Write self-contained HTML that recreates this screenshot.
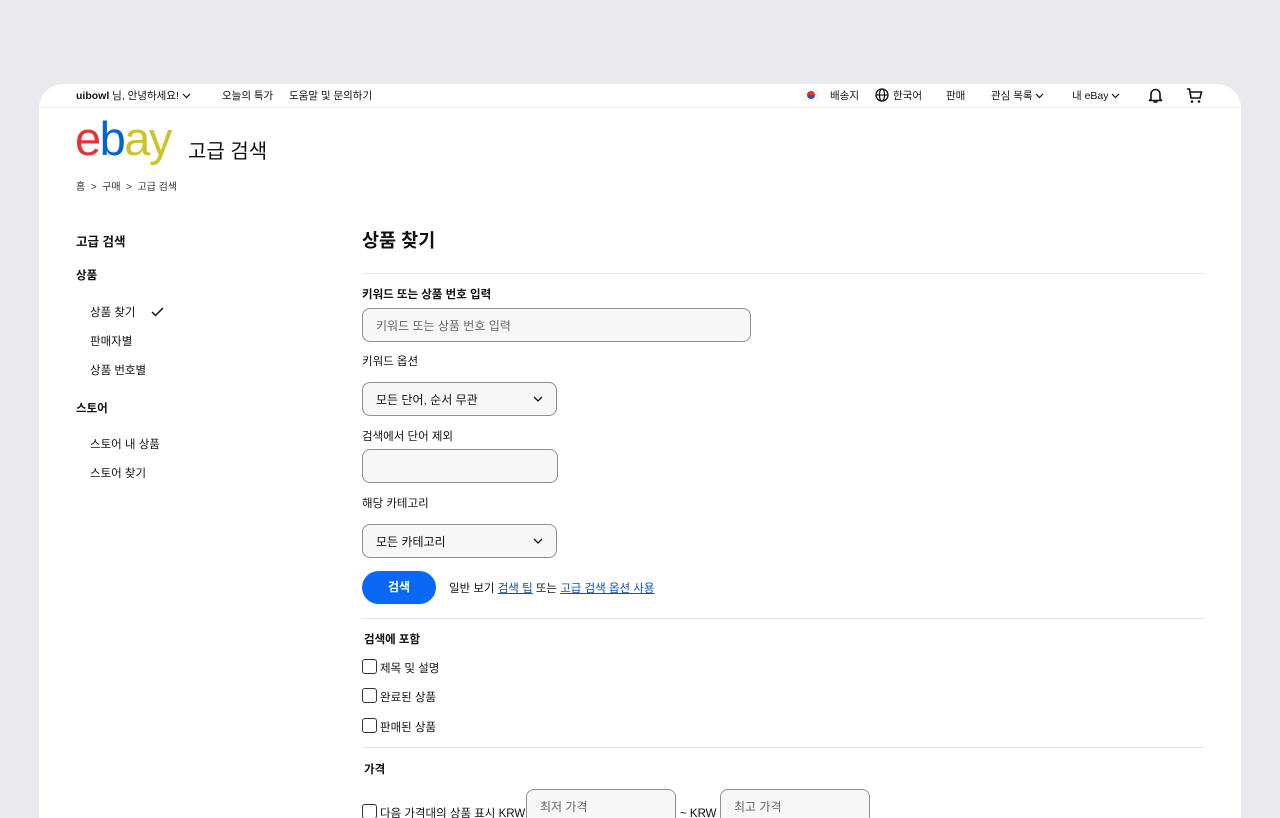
<!DOCTYPE html>
<html style="width:1280px;height:818px;overflow:hidden"><head><meta charset="utf-8"><style>
*{box-sizing:border-box;margin:0;padding:0}
body{width:1280px;height:818px;overflow:hidden;background:#e9e9ee;font-family:"Liberation Sans","Noto Sans CJK KR",sans-serif;color:#111;position:relative}
.card{position:absolute;left:39px;top:84px;width:1202px;height:734px;background:#fff;border-radius:24px 24px 0 0}
.a{position:absolute;white-space:nowrap;line-height:1.2}
.m{margin-top:4px}
.top{font-size:10.5px;margin-top:1px}
.hr{position:absolute;height:1px;background:#e5e5e5}
.inp{position:absolute;border:1px solid #8f8f8f;border-radius:8px;background:#f7f7f7;font-size:12px;color:#666;padding-left:13px;display:flex;align-items:center}
.sel{position:absolute;border:1px solid #8f8f8f;border-radius:8px;background:#f7f7f7;font-size:12px;color:#111;padding-left:13px;display:flex;align-items:center}
.sel svg{position:absolute;right:13px;top:50%;margin-top:-3px}
.cb{position:absolute;width:15px;height:15px;border:1.3px solid #333;border-radius:3px}
.lbl{font-size:11.5px;margin-top:4px}
.b{font-weight:bold}
a{color:#0654ba}
</style></head><body>
<div class="card"></div>
<div class="hr" style="left:39px;top:107px;width:1202px;background:#eee"></div>
<div class="a top" style="left:76px;top:89px"><b>uibowl</b> 님, 안녕하세요! <svg width="9" height="6" viewBox="0 0 9 6"><path d="M1 1l3.5 3.5L8 1" fill="none" stroke="#111" stroke-width="1.2"/></svg></div>
<div class="a top" style="left:222px;top:89px">오늘의 특가</div>
<div class="a top" style="left:289px;top:89px">도움말 및 문의하기</div>
<div class="a" style="left:803px;top:89px;width:16px;height:12px;background:#f4f4f4"><div style="position:absolute;left:4px;top:2px;width:8px;height:8px;border-radius:50%;background:linear-gradient(#d33 50%,#2458b5 50%)"></div></div>
<div class="a top" style="left:830px;top:89px">배송지</div>
<svg class="a" style="left:875px;top:88px" width="14" height="14" viewBox="0 0 14 14"><circle cx="7" cy="7" r="6" fill="none" stroke="#111" stroke-width="1.3"/><ellipse cx="7" cy="7" rx="2.6" ry="6" fill="none" stroke="#111" stroke-width="1.2"/><path d="M1 7h12" stroke="#111" stroke-width="1.2"/></svg>
<div class="a top" style="left:893px;top:89px">한국어</div>
<div class="a top" style="left:946px;top:89px">판매</div>
<div class="a top" style="left:991px;top:89px">관심 목록 <svg width="9" height="6" viewBox="0 0 9 6"><path d="M1 1l3.5 3.5L8 1" fill="none" stroke="#111" stroke-width="1.2"/></svg></div>
<div class="a top" style="left:1072px;top:89px">내 eBay <svg width="9" height="6" viewBox="0 0 9 6"><path d="M1 1l3.5 3.5L8 1" fill="none" stroke="#111" stroke-width="1.2"/></svg></div>
<svg class="a" style="left:1148px;top:87px" width="15" height="17" viewBox="0 0 15 17"><path d="M3 12V7a4.5 4.5 0 0 1 9 0v5l1.5 1.5h-12z" fill="none" stroke="#111" stroke-width="1.6" stroke-linejoin="round"/><path d="M5.5 15h4" stroke="#111" stroke-width="1.6"/></svg>
<svg class="a" style="left:1186px;top:87px" width="17" height="17" viewBox="0 0 17 17"><path d="M1 2h2.5l1.5 9h9l1.5-6H5" fill="none" stroke="#111" stroke-width="1.6"/><circle cx="6" cy="14.5" r="1.3" fill="#111"/><circle cx="13" cy="14.5" r="1.3" fill="#111"/></svg>
<div class="a" style="left:75px;top:111px;font-size:47px;letter-spacing:-1.5px;font-family:'Liberation Sans',sans-serif;line-height:56px"><span style="color:#e53238">e</span><span style="color:#0064d2">b</span><span style="color:#c9c427">a</span><span style="color:#c9c427">y</span></div>
<div class="a m" style="left:188px;top:136px;font-size:20px">고급 검색</div>
<div class="a" style="left:76px;top:182px;font-size:10px;color:#333">홈 &nbsp;&gt;&nbsp; 구매 &nbsp;&gt;&nbsp; 고급 검색</div>
<div class="a b m" style="left:76px;top:231px;font-size:12.5px">고급 검색</div>
<div class="a b lbl" style="left:76px;top:266px">상품</div>
<div class="a lbl" style="left:90px;top:303px">상품 찾기</div>
<svg class="a" style="left:151px;top:307px" width="13" height="10" viewBox="0 0 13 10"><path d="M1 5l3.5 3.5L12 1" fill="none" stroke="#111" stroke-width="1.5"/></svg>
<div class="a lbl" style="left:90px;top:332px">판매자별</div>
<div class="a lbl" style="left:90px;top:361px">상품 번호별</div>
<div class="a b lbl" style="left:76px;top:399px">스토어</div>
<div class="a lbl" style="left:90px;top:435px">스토어 내 상품</div>
<div class="a lbl" style="left:90px;top:464px">스토어 찾기</div>
<div class="a b" style="left:362px;top:230px;font-size:18.5px">상품 찾기</div>
<div class="hr" style="left:362px;top:273px;width:842px"></div>
<div class="a b lbl" style="left:362px;top:285px">키워드 또는 상품 번호 입력</div>
<div class="inp" style="left:362px;top:308px;width:389px;height:34px">키워드 또는 상품 번호 입력</div>
<div class="a lbl" style="left:362px;top:352px">키워드 옵션</div>
<div class="sel" style="left:362px;top:382px;width:195px;height:34px">모든 단어, 순서 무관<svg width="10" height="6" viewBox="0 0 10 6"><path d="M1 1l4 4 4-4" fill="none" stroke="#111" stroke-width="1.3"/></svg></div>
<div class="a lbl" style="left:362px;top:427px">검색에서 단어 제외</div>
<div class="inp" style="left:362px;top:449px;width:196px;height:34px"></div>
<div class="a lbl" style="left:362px;top:494px">해당 카테고리</div>
<div class="sel" style="left:362px;top:524px;width:195px;height:34px">모든 카테고리<svg width="10" height="6" viewBox="0 0 10 6"><path d="M1 1l4 4 4-4" fill="none" stroke="#111" stroke-width="1.3"/></svg></div>
<div class="a b" style="left:362px;top:571px;width:74px;height:33px;border-radius:17px;background:#0968f6;color:#fff;font-size:12px;display:flex;align-items:center;justify-content:center">검색</div>
<div class="a lbl" style="left:449px;top:579px">일반 보기 <a href="#">검색 팁</a> 또는 <a href="#">고급 검색 옵션 사용</a></div>
<div class="hr" style="left:362px;top:618px;width:842px"></div>
<div class="a b lbl" style="left:364px;top:630px">검색에 포함</div>
<div class="cb" style="left:362px;top:659px"></div><div class="a lbl" style="left:380px;top:659px">제목 및 설명</div>
<div class="cb" style="left:362px;top:688px"></div><div class="a lbl" style="left:380px;top:688px">완료된 상품</div>
<div class="cb" style="left:362px;top:718px"></div><div class="a lbl" style="left:380px;top:718px">판매된 상품</div>
<div class="hr" style="left:362px;top:747px;width:842px"></div>
<div class="a b lbl" style="left:364px;top:760px">가격</div>
<div class="cb" style="left:362px;top:804px"></div><div class="a lbl" style="left:380px;top:804px">다음 가격대의 상품 표시 KRW</div>
<div class="inp" style="left:526px;top:789px;width:150px;height:40px;align-items:flex-start;padding-top:8px">최저 가격</div>
<div class="a lbl" style="left:680px;top:804px">~ KRW</div>
<div class="inp" style="left:720px;top:789px;width:150px;height:40px;align-items:flex-start;padding-top:8px">최고 가격</div>
</body></html>
